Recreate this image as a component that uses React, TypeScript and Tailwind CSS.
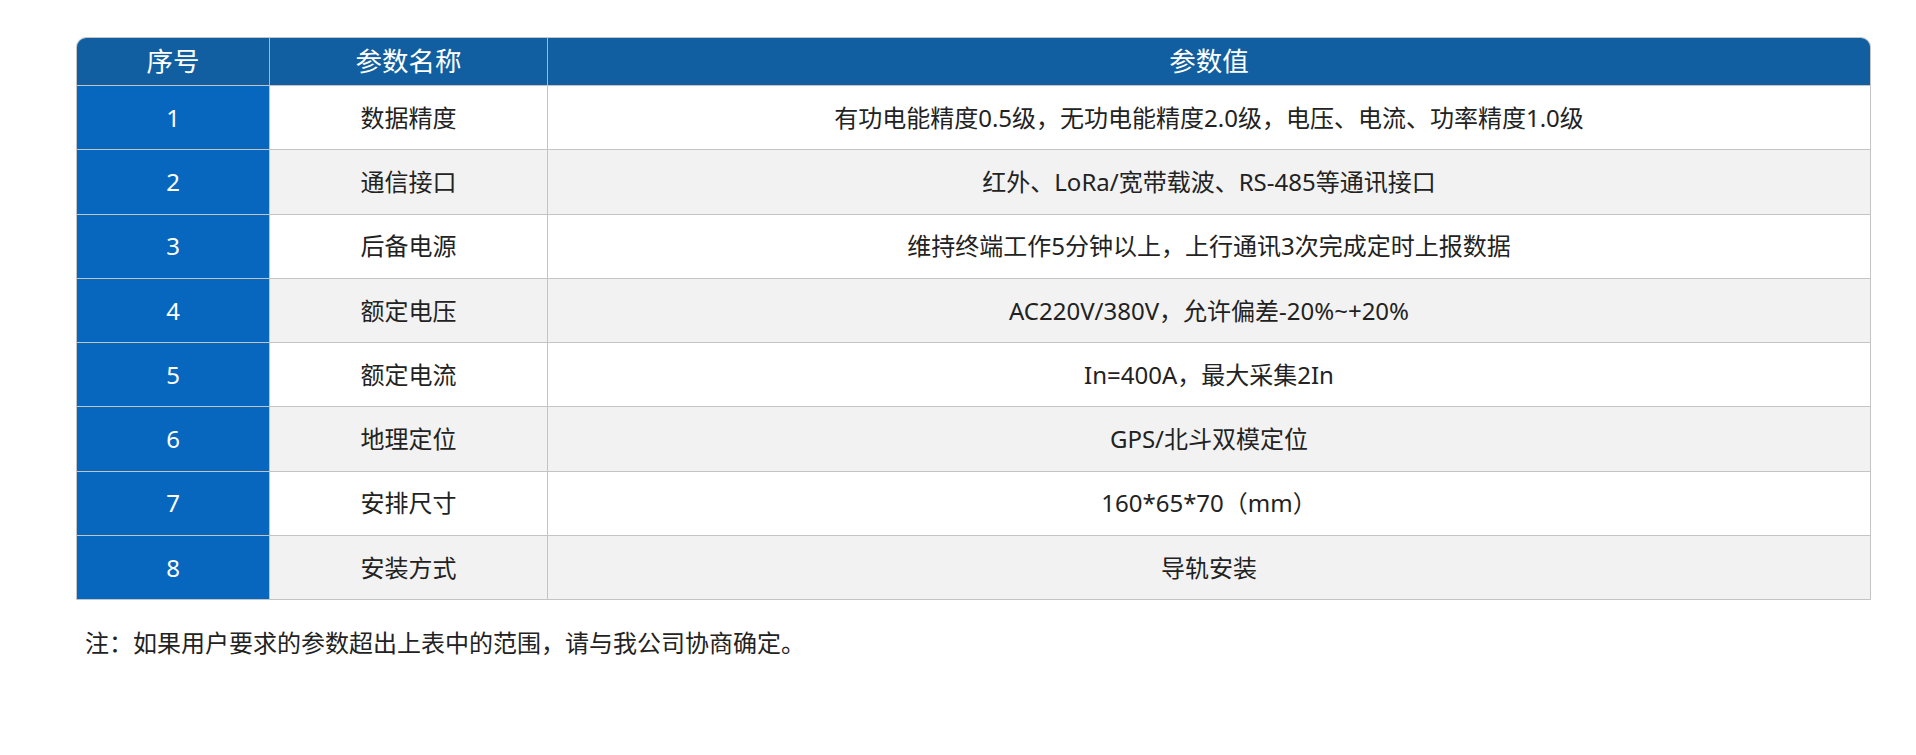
import React from "react";

const rows = [
  { no: "1", name: "数据精度", value: "有功电能精度0.5级，无功电能精度2.0级，电压、电流、功率精度1.0级" },
  { no: "2", name: "通信接口", value: "红外、LoRa/宽带载波、RS-485等通讯接口" },
  { no: "3", name: "后备电源", value: "维持终端工作5分钟以上，上行通讯3次完成定时上报数据" },
  { no: "4", name: "额定电压", value: "AC220V/380V，允许偏差-20%~+20%" },
  { no: "5", name: "额定电流", value: "In=400A，最大采集2In" },
  { no: "6", name: "地理定位", value: "GPS/北斗双模定位" },
  { no: "7", name: "安排尺寸", value: "160*65*70（mm）" },
  { no: "8", name: "安装方式", value: "导轨安装" },
];

export default function App() {
  return (
    <div
      className="min-h-[755px] w-full bg-white pt-[37px] text-[#222]"
      style={{ fontFamily: '"Noto Sans", "Noto Sans CJK SC", sans-serif' }}
    >
      <div className="ml-[76px] w-[1795px]">
        <div className="overflow-hidden rounded-t-[10px] border border-[#c4c4c4]">
          <div className="grid h-[47px] grid-cols-[193px_278px_1fr] bg-[#115fa1] text-[26.5px] text-white">
            <div className="flex items-center justify-center border-r border-[#9fb8d2]">序号</div>
            <div className="flex items-center justify-center border-r border-[#9fb8d2]">参数名称</div>
            <div className="flex items-center justify-center">参数值</div>
          </div>
          {rows.map((r, i) => (
            <div
              key={r.no}
              className={`grid h-[64.3px] grid-cols-[193px_278px_1fr] border-t border-[#c4c4c4] text-[24px] ${
                i % 2 === 1 ? "bg-[#f2f2f2]" : "bg-white"
              }`}
            >
              <div className="flex items-center justify-center border-r border-[#c4c4c4] bg-[#0767bf] text-white">
                {r.no}
              </div>
              <div className="flex items-center justify-center border-r border-[#c4c4c4]">{r.name}</div>
              <div className="flex items-center justify-center">{r.value}</div>
            </div>
          ))}
        </div>
        <p className="mt-[27px] pl-[9px] text-[24px] leading-[32px]">
          注：如果用户要求的参数超出上表中的范围，请与我公司协商确定。
        </p>
      </div>
    </div>
  );
}
